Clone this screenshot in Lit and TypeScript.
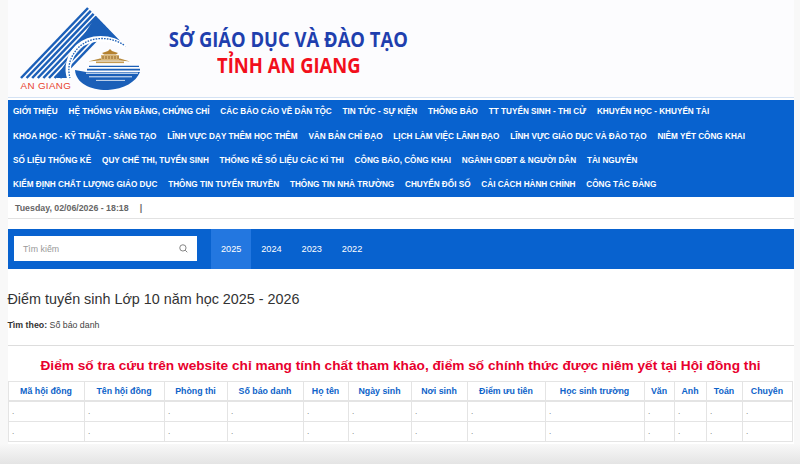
import { LitElement, html, css, svg } from "lit";
import { customElement } from "lit/decorators.js";

const NAV = [
  ["GIỚI THIỆU", "HỆ THỐNG VĂN BẰNG, CHỨNG CHỈ", "CÁC BÁO CÁO VỀ DÂN TỘC", "TIN TỨC - SỰ KIỆN", "THÔNG BÁO", "TT TUYỂN SINH - THI CỬ", "KHUYẾN HỌC - KHUYẾN TÀI"],
  ["KHOA HỌC - KỸ THUẬT - SÁNG TẠO", "LĨNH VỰC DẠY THÊM HỌC THÊM", "VĂN BẢN CHỈ ĐẠO", "LỊCH LÀM VIỆC LÃNH ĐẠO", "LĨNH VỰC GIÁO DỤC VÀ ĐÀO TẠO", "NIÊM YẾT CÔNG KHAI"],
  ["SỐ LIỆU THỐNG KÊ", "QUY CHẾ THI, TUYỂN SINH", "THỐNG KÊ SỐ LIỆU CÁC KÌ THI", "CÔNG BÁO, CÔNG KHAI", "NGÀNH GDĐT & NGƯỜI DÂN", "TÀI NGUYÊN"],
  ["KIỂM ĐỊNH CHẤT LƯỢNG GIÁO DỤC", "THÔNG TIN TUYỂN TRUYỀN", "THÔNG TIN NHÀ TRƯỜNG", "CHUYỂN ĐỔI SỐ", "CẢI CÁCH HÀNH CHÍNH", "CÔNG TÁC ĐẢNG"],
];
const COLS: [string, number][] = [
  ["Mã hội đồng", 76], ["Tên hội đồng", 80], ["Phòng thi", 63], ["Số báo danh", 76], ["Họ tên", 45],
  ["Ngày sinh", 63], ["Nơi sinh", 56], ["Điểm ưu tiên", 78], ["Học sinh trường", 99], ["Văn", 30],
  ["Anh", 32], ["Toán", 36], ["Chuyên", 50],
];
const YEARS = ["2025", "2024", "2023", "2022"];

const stripes = [0, 1, 2, 3, 4, 5, 6, 7].map((i) => {
  const d = i * 5.6;
  return svg`<line x1=${21 + d} y1="78" x2=${88 + d * 0.5} y2=${8 + d * 0.52} stroke="#1b5fb8" stroke-width="2.5"/>`;
});

const logo = svg`<svg class="logo" viewBox="0 0 140 97" width="140" height="97" aria-label="An Giang">
  <path d="M96 16 L126 47 C112 38 93 38 82 47 C72 56 67 68 68 78 L56 78 Z" fill="#1b5fb8"/>
  ${stripes}
  <path d="M125 47 C111 36 90 36 78 47 C69 56 66 68 70 79" fill="none" stroke="#fff" stroke-width="5.5"/>
  <path d="M124 45 C110 36 91 36 79 47 C70 56 67 67 70 78" fill="none" stroke="#1b5fb8" stroke-width="1.3" stroke-dasharray="1.6 1.2"/>
  <path d="M75 70 C76 84 92 90.5 108 90 C124 89 136 82 140 72 L86 72 Z" fill="#1b5fb8"/>
  <path d="M89 66.3 H139" stroke="#1b5fb8" stroke-width="1.3"/>
  <path d="M87 69.6 H140" stroke="#1b5fb8" stroke-width="1.7"/>
  <path d="M86 73.2 H138" stroke="#fff" stroke-width="1"/>
  <path d="M89 76.8 H132" stroke="#fff" stroke-width="0.9"/>
  <path d="M96 80.4 H125" stroke="#fff" stroke-width="0.8"/>
  <path d="M88 61.5 L100 58.5 H120 L130 61.5 L120 60.5 H100 Z" fill="#b88a3c"/>
  <path d="M102 53 L108 51 L110 49 L112 51 L118 53 L116 54.5 H104 Z" fill="#b4812f"/>
  <rect x="101" y="55" width="18" height="5" fill="#d9b676"/>
  <path d="M103 56 v3 M106 56 v3 M109 56 v3 M112 56 v3 M115 56 v3 M118 56 v3" stroke="#8a5b20" stroke-width="0.9"/>
  <rect x="96" y="61.5" width="28" height="1.6" fill="#c49a52"/>
  <text x="20.5" y="89" class="ag">AN GIANG</text>
</svg>`;

@customElement("app-root")
export class AppRoot extends LitElement {
  static styles = css`
    :host { display: block; height: 464px; overflow: hidden; font-family: "Liberation Sans", Arial, sans-serif; background: linear-gradient(#f8f8f8, #f8f8f8 444px, #e4e4e4 464px); }
    .page { width: 786px; height: 444px; margin-left: 7.5px; background: #fff; display: flex; flex-direction: column; }
    .banner { height: 97.5px; background: #fcfcfe; border-bottom: 1.5px solid #d4e2f4; display: flex; align-items: stretch; box-sizing: border-box; margin-bottom: 2px; flex: none; }
    .logo { flex: none; margin-left: -7.5px; }
    .ag { font: 400 9.8px "Liberation Sans", sans-serif; fill: #e8432f; letter-spacing: .35px; }
    .brand { margin-left: 28.5px; width: 240px; display: flex; flex-direction: column; align-items: center; font-family: "Open Sans", sans-serif; font-weight: 700; font-size: 21px; line-height: 26px; padding-top: 26px; white-space: nowrap; }
    .brand span { display: block; transform: scaleX(.877); }
    .b1 { color: #1f3fae; }
    .b2 { color: #f20f1b; }
    nav { background: #0862cf; height: 97.5px; padding: 0 5.5px; display: flex; flex-direction: column; flex: none; }
    .nr { flex: 1; display: flex; align-items: center; gap: 10.8px; }
    .nr a { color: #fff; font-size: 8.2px; font-weight: 700; white-space: nowrap; }
    .date { height: 19.5px; padding: 1.5px 0 0 7.5px; border-bottom: 1px solid #e2e2e2; display: flex; align-items: center; gap: 11px; font-size: 8.8px; font-weight: 700; color: #666; flex: none; }
    .search { margin-top: 10px; height: 39.5px; background: #0862cf; display: flex; align-items: stretch; flex: none; }
    .box { margin: 7px 14px 7.5px 6.5px; width: 183px; background: #fff; display: flex; align-items: center; justify-content: space-between; padding: 0 9px; box-sizing: border-box; font-size: 8.8px; color: #999; }
    .box svg { display: block; }
    .yr { width: 40.3px; display: flex; align-items: center; justify-content: center; color: #fff; font-size: 9.2px; }
    .yr.on { background: #2377e0; }
    h1 { font-size: 14.36px; font-weight: 400; color: #333; margin: 21px 0 0; line-height: 18px; flex: none; }
    .by { font-size: 8.8px; color: #444; margin-top: 12.5px; line-height: 11px; flex: none; }
    .by b { color: #333; }
    hr { border: 0; border-top: 1px solid #ddd; margin: 14px 0 0; flex: none; width: 100%; }
    .warn { text-align: center; color: #e8002d; font-size: 13.68px; font-weight: 700; line-height: 18px; margin-top: 11px; flex: none; }
    table { border-collapse: collapse; table-layout: fixed; width: 785px; margin-top: 5.5px; flex: none; }
    th, td { border: 1px solid #e4e4e4; padding: 0 0 0 3.5px; text-align: left; }
    th { height: 18.5px; color: #0d63c9; font-size: 8.8px; font-weight: 700; text-align: center; padding: 0; border-bottom-width: 2px; }
    td { height: 19px; font-size: 8px; color: #666; }
  `;

  render() {
    return html`<div class="page">
      <header class="banner">
        ${logo}
        <div class="brand"><span class="b1">SỞ GIÁO DỤC VÀ ĐÀO TẠO</span><span class="b2">TỈNH AN GIANG</span></div>
      </header>
      <nav>${NAV.map((r) => html`<div class="nr">${r.map((t) => html`<a>${t}</a>`)}</div>`)}</nav>
      <div class="date"><span>Tuesday, 02/06/2026 - 18:18</span><span>|</span></div>
      <div class="search">
        <div class="box"><span>Tìm kiếm</span>
          <svg width="9" height="9" viewBox="0 0 12 12" fill="none" stroke="#777" stroke-width="1.2"><circle cx="5.2" cy="5.2" r="4.2"/><path d="M8.3 8.3 11 11"/></svg>
        </div>
        ${YEARS.map((y, i) => html`<div class="yr ${i === 0 ? "on" : ""}">${y}</div>`)}
      </div>
      <h1>Điểm tuyển sinh Lớp 10 năm học 2025 - 2026</h1>
      <div class="by"><b>Tìm theo:</b> Số báo danh</div>
      <hr />
      <div class="warn">Điểm số tra cứu trên website chỉ mang tính chất tham khảo, điểm số chính thức được niêm yết tại Hội đồng thi</div>
      <table>
        <colgroup>${COLS.map((c) => html`<col style="width:${c[1]}px" />`)}</colgroup>
        <thead><tr>${COLS.map((c) => html`<th>${c[0]}</th>`)}</tr></thead>
        <tbody>${[0, 1].map(() => html`<tr>${COLS.map(() => html`<td>.</td>`)}</tr>`)}</tbody>
      </table>
    </div>`;
  }
}
